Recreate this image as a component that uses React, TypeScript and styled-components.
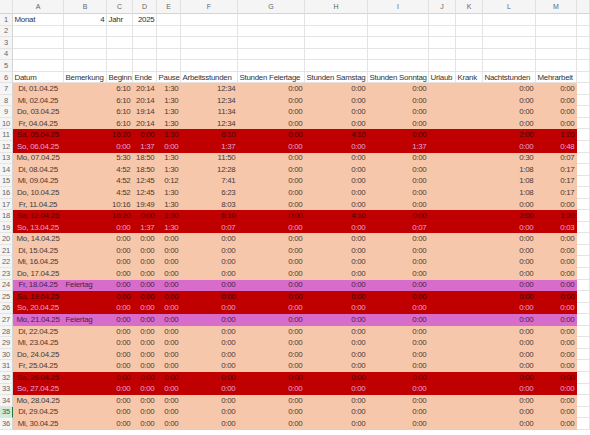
import React from 'react'
import styled, { createGlobalStyle } from 'styled-components'

const GlobalStyle = createGlobalStyle`
  body { margin: 0; background: #fff; font-family: "Liberation Sans", Arial, sans-serif; }
`

const COLS = ['A', 'B', 'C', 'D', 'E', 'F', 'G', 'H', 'I', 'J', 'K', 'L', 'M']
const WIDTHS = [51, 43, 26, 24, 24, 57, 67, 63, 61, 27, 27, 53, 41]
const TEMPLATE = `13px ${WIDTHS.map((w) => w + 'px').join(' ')} 1fr`

type Kind = 'plain' | 'work' | 'sat' | 'sun' | 'hol'

const fills: Record<Kind, string> = {
  plain: '#fff',
  work: '#f7c7ab',
  sat: '#c00000',
  sun: '#c00000',
  hol: '#d86ccb',
}
const inks: Record<Kind, string> = {
  plain: '#333',
  work: '#4a3a33',
  sat: '#3c0808',
  sun: '#e7a0d8',
  hol: '#4a2248',
}

const Sheet = styled.div`
  width: 590px;
  height: 435px;
  overflow: hidden;
  font-size: 7.9px;
  letter-spacing: -0.25px;
  color: #333;
`

const Row = styled.div<{ $h: number }>`
  display: grid;
  grid-template-columns: ${TEMPLATE};
  height: ${(p) => p.$h}px;
`

const ColHead = styled.div`
  background: #f5f5f5;
  border-right: 1px solid #e1e1e1;
  border-bottom: 1px solid #d4d4d4;
  color: #666;
  font-size: 7px;
  letter-spacing: 0;
  display: flex;
  align-items: center;
  justify-content: center;
`

const RowNum = styled.div<{ $sel?: boolean }>`
  background: ${(p) => (p.$sel ? '#d3ead9' : '#f5f5f5')};
  color: ${(p) => (p.$sel ? '#1d6b3a' : '#666')};
  border-right: 1px solid ${(p) => (p.$sel ? '#1d7a45' : '#d4d4d4')};
  border-bottom: 1px solid #e4e4e4;
  font-size: 7.5px;
  display: flex;
  align-items: center;
  justify-content: center;
`

const Cell = styled.div<{ $kind: Kind; $right?: boolean; $center?: boolean; $fill?: boolean }>`
  background: ${(p) => (p.$fill ? fills[p.$kind] : '#fff')};
  color: ${(p) => inks[p.$kind]};
  border-right: 1px solid ${(p) => (p.$fill && p.$kind !== 'plain' ? fills[p.$kind] : '#e4e4e4')};
  border-bottom: 1px solid ${(p) => (p.$fill && p.$kind !== 'plain' ? fills[p.$kind] : '#e4e4e4')};
  display: flex;
  align-items: center;
  justify-content: ${(p) => (p.$center ? 'center' : p.$right ? 'flex-end' : 'flex-start')};
  padding: 0 1.5px;
  white-space: nowrap;
  overflow: hidden;
  box-sizing: border-box;
`

type Data = { date: string; kind: Kind; note?: string; v: string[] }

const z = '0:00'
const zeros = (n: number) => Array(n).fill(z)
const mk = (date: string, kind: Kind, v: string[], note?: string): Data => ({ date, kind, v, note })

// v: C D E F G H I J K L M
const rows: Data[] = [
  mk('Di, 01.04.25', 'work', ['6:10', '20:14', '1:30', '12:34', z, z, z, '', '', z, z]),
  mk('Mi, 02.04.25', 'work', ['6:10', '20:14', '1:30', '12:34', z, z, z, '', '', z, z]),
  mk('Do, 03.04.25', 'work', ['6:10', '19:14', '1:30', '11:34', z, z, z, '', '', z, z]),
  mk('Fr, 04.04.25', 'work', ['6:10', '20:14', '1:30', '12:34', z, z, z, '', '', z, z]),
  mk('Sa, 05.04.25', 'sat', ['16:20', z, '1:30', '6:10', z, '4:10', z, '', '', '2:00', '1:20']),
  mk('So, 06.04.25', 'sun', [z, '1:37', z, '1:37', z, z, '1:37', '', '', z, '0:48']),
  mk('Mo, 07.04.25', 'work', ['5:30', '18:50', '1:30', '11:50', z, z, z, '', '', '0:30', '0:07']),
  mk('Di, 08.04.25', 'work', ['4:52', '18:50', '1:30', '12:28', z, z, z, '', '', '1:08', '0:17']),
  mk('Mi, 09.04.25', 'work', ['4:52', '12:45', '0:12', '7:41', z, z, z, '', '', '1:08', '0:17']),
  mk('Do, 10.04.25', 'work', ['4:52', '12:45', '1:30', '6:23', z, z, z, '', '', '1:08', '0:17']),
  mk('Fr, 11.04.25', 'work', ['10:16', '19:49', '1:30', '8:03', z, z, z, '', '', z, z]),
  mk('Sa, 12.04.25', 'sat', ['16:20', z, '1:30', '6:10', z, '4:10', z, '', '', '2:00', '1:20']),
  mk('So, 13.04.25', 'sun', [z, '1:37', '1:30', '0:07', z, z, '0:07', '', '', z, '0:03']),
  mk('Mo, 14.04.25', 'work', [...zeros(7), '', '', z, z]),
  mk('Di, 15.04.25', 'work', [...zeros(7), '', '', z, z]),
  mk('Mi, 16.04.25', 'work', [...zeros(7), '', '', z, z]),
  mk('Do, 17.04.25', 'work', [...zeros(7), '', '', z, z]),
  mk('Fr, 18.04.25', 'hol', [...zeros(7), '', '', z, z], 'Feiertag'),
  mk('Sa, 19.04.25', 'sat', [...zeros(7), '', '', z, z]),
  mk('So, 20.04.25', 'sun', [...zeros(7), '', '', z, z]),
  mk('Mo, 21.04.25', 'hol', [...zeros(7), '', '', z, z], 'Feiertag'),
  mk('Di, 22.04.25', 'work', [...zeros(7), '', '', z, z]),
  mk('Mi, 23.04.25', 'work', [...zeros(7), '', '', z, z]),
  mk('Do, 24.04.25', 'work', [...zeros(7), '', '', z, z]),
  mk('Fr, 25.04.25', 'work', [...zeros(7), '', '', z, z]),
  mk('Sa, 26.04.25', 'sat', [...zeros(7), '', '', z, z]),
  mk('So, 27.04.25', 'sun', [...zeros(7), '', '', z, z]),
  mk('Mo, 28.04.25', 'work', [...zeros(7), '', '', z, z]),
  mk('Di, 29.04.25', 'work', [...zeros(7), '', '', z, z]),
  mk('Mi, 30.04.25', 'work', [...zeros(7), '', '', z, z]),
]

const headers = ['Datum', 'Bemerkung', 'Beginn', 'Ende', 'Pause', 'Arbeitsstunden', 'Stunden Feiertage',
  'Stunden Samstag', 'Stunden Sonntag', 'Urlaub', 'Krank', 'Nachtstunden', 'Mehrarbeit']

const RH = 11.55

const Blank = ({ n }: { n: number }) => (
  <Row $h={RH}>
    <RowNum>{n}</RowNum>
    {COLS.map((c) => <Cell key={c} $kind="plain" />)}
    <Cell $kind="plain" />
  </Row>
)

export default function App() {
  return (
    <Sheet>
      <GlobalStyle />
      <Row $h={14}>
        <ColHead />
        {COLS.map((c) => <ColHead key={c}>{c}</ColHead>)}
        <ColHead />
      </Row>
      <Row $h={RH}>
        <RowNum>1</RowNum>
        <Cell $kind="plain">Monat</Cell>
        <Cell $kind="plain" $right>4</Cell>
        <Cell $kind="plain">Jahr</Cell>
        <Cell $kind="plain" $right>2025</Cell>
        {COLS.slice(4).map((c) => <Cell key={c} $kind="plain" />)}
        <Cell $kind="plain" />
      </Row>
      {[2, 3, 4, 5].map((n) => <Blank key={n} n={n} />)}
      <Row $h={RH}>
        <RowNum>6</RowNum>
        {headers.map((h) => <Cell key={h} $kind="plain">{h}</Cell>)}
        <Cell $kind="plain" />
      </Row>
      {rows.map((r, i) => {
        const n = i + 7
        return (
          <Row $h={RH} key={n}>
            <RowNum $sel={n === 35}>{n}</RowNum>
            <Cell $kind={r.kind} $fill $center>{r.date}</Cell>
            <Cell $kind={r.kind} $fill>{r.note}</Cell>
            {r.v.map((v, j) => <Cell key={j} $kind={r.kind} $fill $right>{v}</Cell>)}
            <Cell $kind="plain" />
          </Row>
        )
      })}
    </Sheet>
  )
}
